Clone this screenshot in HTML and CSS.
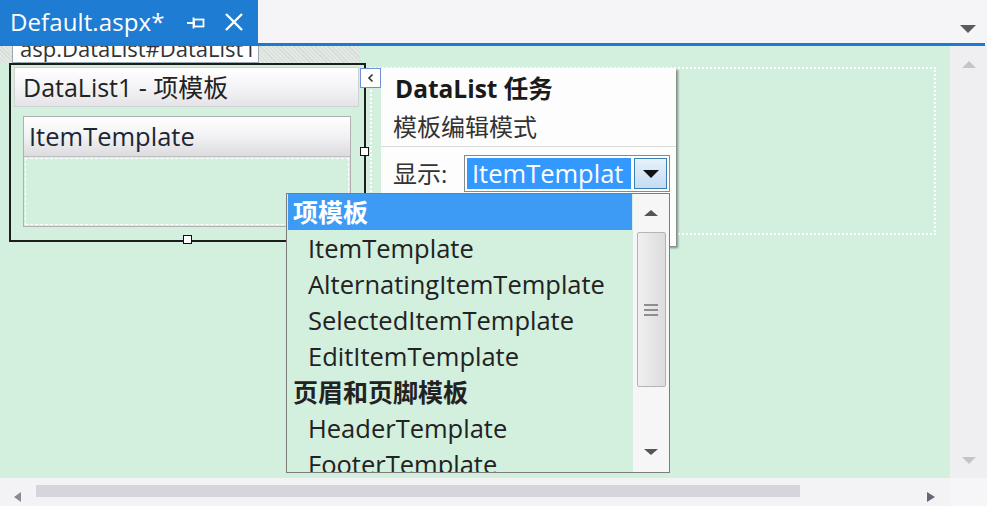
FILE: index.html
```html
<!DOCTYPE html>
<html lang="zh">
<head>
<meta charset="utf-8">
<title>Default.aspx</title>
<link rel="stylesheet" href="styles.css">
</head>
<body>
<div class="window">
  <div class="tabbar">
    <div class="tab">
      <span class="tab-title">Default.aspx*</span>
      <svg class="pin" width="18" height="12" viewBox="0 0 18 12"><path d="M0 6H6M6.5 0.5V11.5" stroke="#fff" stroke-width="1.8" fill="none"/><rect x="7" y="2.5" width="9.5" height="7" stroke="#fff" stroke-width="1.8" fill="none"/></svg>
      <svg class="close" width="20" height="20" viewBox="0 0 20 20"><path d="M2 2L18 18M18 2L2 18" stroke="#fff" stroke-width="2.4"/></svg>
    </div>
    <div class="tab-spacer"></div>
    <div class="tab-menu"></div>
  </div>
  <div class="main">
    <div class="surface">
      <div class="band">
        <div class="tag"><span>asp.DataList#DataList1</span></div>
      </div>
      <div class="box">
        <div class="box-head">DataList1 - 项模板</div>
        <div class="panel">
          <div class="panel-head">ItemTemplate</div>
          <div class="panel-body"></div>
        </div>
        <div class="handle handle-r"></div>
        <div class="handle handle-b"></div>
      </div>

      <div class="dotted"></div>
      <div class="smart">
        <svg width="10" height="10" viewBox="0 0 10 10"><path d="M6.5 1.5L3 5L6.5 8.5" stroke="#333" stroke-width="1.6" fill="none"/></svg>
      </div>
      <div class="tasks">
        <div class="tasks-title">DataList 任务</div>
        <div class="tasks-sub">模板编辑模式</div>
        <div class="tasks-row">
          <span class="tasks-label">显示:</span>
          <div class="select">
            <div class="select-value">ItemTemplat</div>
            <div class="select-btn"><span class="tri-down"></span></div>
          </div>
        </div>
      </div>

      <div class="listbox">
        <div class="items">
          <div class="row group selected">项模板</div>
          <div class="row">ItemTemplate</div>
          <div class="row">AlternatingItemTemplate</div>
          <div class="row">SelectedItemTemplate</div>
          <div class="row">EditItemTemplate</div>
          <div class="row group">页眉和页脚模板</div>
          <div class="row">HeaderTemplate</div>
          <div class="row">FooterTemplate</div>
        </div>
        <div class="lscroll">
          <div class="lbtn"><span class="tri-up-s"></span></div>
          <div class="lthumb"><span class="grip"></span><span class="grip"></span><span class="grip"></span></div>
          <div class="lfill"></div>
          <div class="lbtn lbtn-down"><span class="tri-down-s"></span></div>
        </div>
      </div>
    </div>
    <div class="vscroll">
      <span class="v-up"></span>
      <span class="v-down"></span>
    </div>
  </div>
  <div class="hscroll">
    <div class="h-left-cell"><span class="h-left"></span></div>
    <div class="h-track"><div class="h-thumb"></div></div>
    <div class="h-right-cell"><span class="h-right"></span></div>
    <div class="h-corner"></div>
  </div>
</div>
</body>
</html>
```

FILE: styles.css
```css
* { box-sizing: border-box; }
html, body { margin: 0; padding: 0; }
body {
  width: 987px;
  height: 506px;
  overflow: hidden;
  background: #f5f5f7;
  font-family: "Open Sans", "Noto Sans CJK SC", sans-serif;
  color: #222;
}
.window { width: 987px; height: 506px; display: flex; flex-direction: column; }

/* tab bar */
.tabbar {
  height: 46px;
  display: flex;
  align-items: flex-start;
  background: #f5f5f7;
  border-bottom: 3px solid #1c7bd0;
  margin-right: 2px;
}
.tab {
  width: 258px;
  height: 43px;
  background: #1e7cd2;
  display: flex;
  align-items: center;
  padding-left: 10px;
  color: #fff;
}
.tab-title { font-size: 24px; line-height: 30px; letter-spacing: 0.1px; }
.pin { margin-left: 23px; margin-top: 2px; }
.close { margin-left: 19px; }
.tab-spacer { flex: 1; }
.tab-menu {
  width: 0; height: 0;
  margin: 25px 9px 0 0;
  border-left: 8px solid transparent;
  border-right: 8px solid transparent;
  border-top: 8px solid #5a5a60;
}

/* main area */
.main { display: flex; height: 432px; }
.surface {
  position: relative;
  flex: 1;
  background: #d3efdd;
  overflow: hidden;
}
.band {
  width: 360px;
  height: 17px;
  background: repeating-linear-gradient(45deg, #d4ddd7 0 1px, #e2e9e4 1px 3px);
}
.tag {
  margin-left: 12px;
  width: 247px;
  height: 17px;
  background: #fff;
  border: 1px solid #9aa8b0;
  border-top: none;
  overflow: hidden;
  font-size: 22px;
  line-height: 4px;
  padding-left: 7px;
  color: #333;
}
.box {
  position: relative;
  margin-left: 9px;
  width: 357px;
  height: 179px;
  border: 2px solid #1d1d1d;
  padding: 2px 5px 0 3px;
}
.box-head {
  height: 40px;
  border: 1px solid #cfd3d5;
  background: linear-gradient(#ffffff, #f4f4f6 50%, #e4e4e8);
  font-size: 25px;
  line-height: 38px;
  padding-left: 8px;
  color: #222;
}
.panel {
  margin: 9px 0 0 9px;
  width: 328px;
  height: 111px;
  border: 1px solid #b0b0b0;
  display: flex;
  flex-direction: column;
}
.panel-head {
  height: 40px;
  background: linear-gradient(#ffffff, #f2f2f4 50%, #dcdce0);
  border-bottom: 1px solid #c0c0c0;
  font-size: 25.5px;
  line-height: 38px;
  padding-left: 5px;
  color: #1d2633;
}
.panel-body {
  flex: 1;
  margin: 1px;
  border: 1px dashed #ffffff;
}
.handle {
  position: absolute;
  width: 9px;
  height: 9px;
  background: #fff;
  border: 1px solid #111;
}
.handle-r { left: 349px; top: 82px; }
.handle-b { left: 172px; top: 170px; }

/* overlays */
.dotted {
  position: absolute;
  left: 370px;
  top: 21px;
  width: 566px;
  height: 168px;
  border: 2px dotted #ffffff;
}
.smart {
  position: absolute;
  left: 360px;
  top: 22px;
  width: 21px;
  height: 20px;
  background: #fff;
  border: 1px solid #6f8fd6;
  display: flex;
  align-items: center;
  justify-content: center;
}
.tasks {
  position: absolute;
  left: 381px;
  top: 22px;
  width: 295px;
  height: 178px;
  background: #fdfdfd;
  box-shadow: 2px 2px 2px rgba(60, 60, 60, 0.55);
}
.tasks-title {
  height: 40px;
  font-size: 24.5px;
  font-weight: 700;
  line-height: 42px;
  padding-left: 14px;
  color: #1a1a1a;
}
.tasks-sub {
  height: 39px;
  font-size: 24px;
  line-height: 38px;
  padding-left: 12px;
  color: #333;
  border-bottom: 1px solid #dadada;
}
.tasks-row {
  display: flex;
  align-items: center;
  padding: 8px 0 0 12px;
}
.tasks-label { font-size: 24px; line-height: 36px; width: 71px; color: #333; }
.select {
  width: 206px;
  height: 37px;
  border: 1px solid #8a8a8a;
  background: #fff;
  display: flex;
  padding: 2px;
}
.select-value {
  flex: 1;
  background: #3399ff;
  color: #fff;
  font-size: 25.5px;
  line-height: 31px;
  padding-left: 5px;
  overflow: hidden;
  white-space: nowrap;
}
.select-btn {
  width: 33px;
  margin-left: 3px;
  border: 1px solid #3c7fb1;
  background: linear-gradient(#e6f1fb, #c4dcf2);
  display: flex;
  align-items: center;
  justify-content: center;
}
.tri-down {
  width: 0; height: 0;
  border-left: 8px solid transparent;
  border-right: 8px solid transparent;
  border-top: 8px solid #111;
}

.listbox {
  position: absolute;
  left: 286px;
  top: 147px;
  width: 384px;
  height: 280px;
  border: 1px solid #7c7c7c;
  background: #d3efdd;
  display: flex;
}
.items { flex: 1; overflow: hidden; padding: 0 1px; }
.row {
  height: 36px;
  font-size: 25.5px;
  line-height: 36px;
  padding-left: 20px;
  white-space: nowrap;
  color: #222;
}
.row.group { font-weight: 700; padding-left: 5px; font-size: 25px; }
.row.selected { background: #3d9af5; color: #fff; }
.lscroll {
  width: 36px;
  background: #f6f6f6;
  display: flex;
  flex-direction: column;
  align-items: center;
}
.lbtn {
  height: 38px;
  width: 100%;
  display: flex;
  align-items: center;
  justify-content: center;
}
.lbtn-down { height: 40px; }
.tri-up-s, .tri-down-s {
  width: 0; height: 0;
  border-left: 7px solid transparent;
  border-right: 7px solid transparent;
}
.tri-up-s { border-bottom: 6px solid #555; }
.tri-down-s { border-top: 6px solid #555; }
.lthumb {
  width: 29px;
  height: 155px;
  border: 1px solid #b4b4b4;
  border-radius: 2px;
  background: linear-gradient(90deg, #f0f0f0, #dcdcdc);
  display: flex;
  flex-direction: column;
  align-items: center;
  justify-content: center;
  gap: 3px;
}
.grip { width: 14px; height: 2px; background: #8e8e8e; }
.lfill { flex: 1; }

/* scrollbars */
.vscroll {
  width: 37px;
  background: #efeff2;
  display: flex;
  flex-direction: column;
  align-items: center;
  justify-content: space-between;
  padding: 15px 0 14px;
}
.v-up, .v-down {
  width: 0; height: 0;
  border-left: 7px solid transparent;
  border-right: 7px solid transparent;
}
.v-up { border-bottom: 7px solid #c4c4cb; }
.v-down { border-top: 7px solid #c4c4cb; }
.hscroll {
  height: 28px;
  display: flex;
  background: #f3f3f5;
}
.h-left-cell, .h-right-cell {
  display: flex;
  align-items: flex-end;
  padding-bottom: 4px;
}
.h-left-cell { width: 36px; padding-left: 14px; }
.h-left {
  width: 0; height: 0;
  border-top: 5px solid transparent;
  border-bottom: 5px solid transparent;
  border-right: 7px solid #8a8a90;
}
.h-track {
  width: 891px;
  padding-top: 7px;
}
.h-thumb { width: 764px; height: 12px; background: #d5d5db; }
.h-right-cell { width: 23px; padding-left: 0; }
.h-right {
  width: 0; height: 0;
  border-top: 5px solid transparent;
  border-bottom: 5px solid transparent;
  border-left: 8px solid #66667a;
}
.h-corner { flex: 1; background: #f6f6f8; }
```
